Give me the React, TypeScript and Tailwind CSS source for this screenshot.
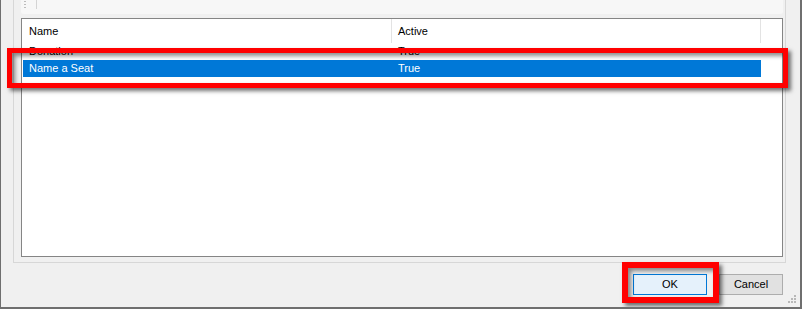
import React from "react"

const rows = [
  { name: "Donation", active: "True", selected: false },
  { name: "Name a Seat", active: "True", selected: true },
]

function ResizeGrip() {
  const dots = [
    [6, 0],
    [3, 3],
    [6, 3],
    [0, 6],
    [3, 6],
    [6, 6],
  ]
  return (
    <svg width="9" height="9" viewBox="0 0 9 9" className="absolute right-[3px] bottom-[3px]">
      {dots.map(([x, y], i) => (
        <rect key={i} x={x} y={y} width="2" height="2" fill="#b8b8b8" />
      ))}
    </svg>
  )
}

export default function App() {
  return (
    <div
      className="relative w-[802px] h-[309px] overflow-hidden bg-[#f0f0f0] border-l border-r-2 border-b-2 border-[#6f6f6f] text-[11px] text-black"
      style={{ fontFamily: '"Liberation Sans", Arial, sans-serif' }}
    >
      {/* Group panel */}
      <div className="ml-[12px] w-[773px] h-[263px] border-x border-b border-[#d7d7d7] bg-[#f0f0f0] pl-[7px] pr-[3px]">
        {/* Toolbar strip */}
        <div className="h-[14px] w-[762px] rounded-b-[3px] bg-[#f7f7f7] flex items-start pl-[3px]">
          <div className="flex flex-col gap-[2px] pt-[1px]">
            <span className="block w-[2px] h-[1px] bg-[#bcbcbc]" />
            <span className="block w-[2px] h-[1px] bg-[#bcbcbc]" />
            <span className="block w-[2px] h-[1px] bg-[#bcbcbc]" />
          </div>
          <div className="ml-[10px] w-px h-[9px] bg-[#d4d4d4]" />
        </div>

        {/* Grid */}
        <div className="mt-[4px] w-[762px] h-[239px] border border-[#858585] bg-white">
          <div className="flex h-[24px] items-center bg-white">
            <div className="w-[370px] h-full flex items-center pl-[7px] border-r border-[#e3e3e3]">Name</div>
            <div className="w-[369px] h-full flex items-center pl-[6px] border-r border-[#e3e3e3]">Active</div>
          </div>
          <div className="pl-px">
            {rows.map((r) => (
              <div
                key={r.name}
                className={`flex h-[17px] items-center w-[738px] ${r.selected ? "bg-[#0078d7] text-white" : "text-black"}`}
              >
                <div className="w-[369px] pl-[6px] leading-none">{r.name}</div>
                <div className="pl-[6px] leading-none">{r.active}</div>
              </div>
            ))}
          </div>
        </div>
      </div>

      {/* Buttons */}
      <div className="flex justify-end gap-[12px] pr-[17px] mt-[11px]">
        <button className="w-[74px] h-[21px] border border-[#0078d7] bg-[#e5f1fb] flex items-center justify-center">OK</button>
        <button className="w-[64px] h-[21px] border border-[#adadad] bg-[#e1e1e1] flex items-center justify-center">Cancel</button>
      </div>

      <ResizeGrip />

      {/* Annotation boxes */}
      <div className="absolute left-[6px] top-[48px] w-[781px] h-[40px] border-[5px] border-[#ff0000] shadow-[3px_3px_4px_rgba(0,0,0,0.55),inset_3px_3px_4px_rgba(0,0,0,0.45)]" />
      <div className="absolute left-[621px] top-[262px] w-[97px] h-[41px] border-[6px] border-[#ff0000] shadow-[3px_3px_4px_rgba(0,0,0,0.55),inset_3px_3px_4px_rgba(0,0,0,0.45)]" />
    </div>
  )
}
